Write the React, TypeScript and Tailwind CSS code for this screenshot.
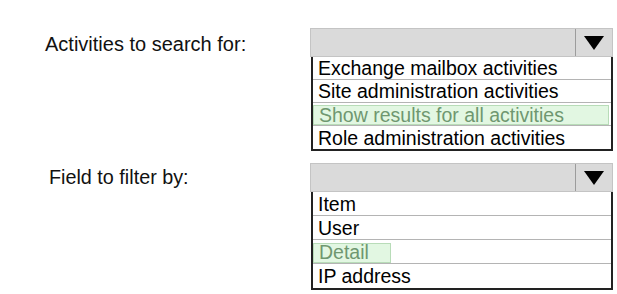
const font = "font-['Liberation_Sans',Arial,sans-serif]";

type Option = { label: string; highlight?: "full" | "short" };

function Select() {
  return (
    <div className="flex h-[29px] w-[303px] border border-[#c4c4c4] bg-[#dadada]">
      <div className="flex-1" />
      <div className="flex w-[37px] items-center justify-center border-l border-[#9c9c9c]">
        <svg width="20" height="14" viewBox="0 0 20 14">
          <polygon points="0,0 20,0 10,14" fill="#000" />
        </svg>
      </div>
    </div>
  );
}

function OptionList({ options, rowH }: { options: Option[]; rowH: string }) {
  return (
    <div className="ml-[1px] w-[302px] border-x-2 border-b-2 border-[#222] bg-white">
      {options.map((o, i) => (
        <div
          key={o.label}
          className={`${rowH} flex items-center pt-[2px] ${i < options.length - 1 ? "border-b border-[#b4b4b4]" : ""}`}
        >
          {o.highlight ? (
            <div
              className={`flex h-[20px] items-center border border-[#b8dcb8] bg-[#e2f7e2] pl-[5px] pt-[1px] text-[#6f9770] ${
                o.highlight === "full" ? "w-[296px]" : "w-[78px]"
              }`}
            >
              {o.label}
            </div>
          ) : (
            <span className="pl-[5px] text-black">{o.label}</span>
          )}
        </div>
      ))}
    </div>
  );
}

export default function App() {
  return (
    <div className={`h-[294px] w-[617px] bg-white ${font} text-[19.5px] leading-none`}>
      <div className="flex flex-col gap-[12px] pt-[28px]">
        <div className="flex">
          <div className="w-[310px] pl-[45px] pt-[6px] text-[20px] text-[#111]">Activities to search for:</div>
          <div className="flex flex-col">
            <Select />
            <OptionList
              rowH="h-[23px]"
              options={[
                { label: "Exchange mailbox activities" },
                { label: "Site administration activities" },
                { label: "Show results for all activities", highlight: "full" },
                { label: "Role administration activities" },
              ]}
            />
          </div>
        </div>
        <div className="flex">
          <div className="w-[310px] pl-[49px] pt-[5px] text-[19.8px] text-[#111]">Field to filter by:</div>
          <div className="flex flex-col">
            <Select />
            <OptionList
              rowH="h-[24px]"
              options={[
                { label: "Item" },
                { label: "User" },
                { label: "Detail", highlight: "short" },
                { label: "IP address" },
              ]}
            />
          </div>
        </div>
      </div>
    </div>
  );
}
